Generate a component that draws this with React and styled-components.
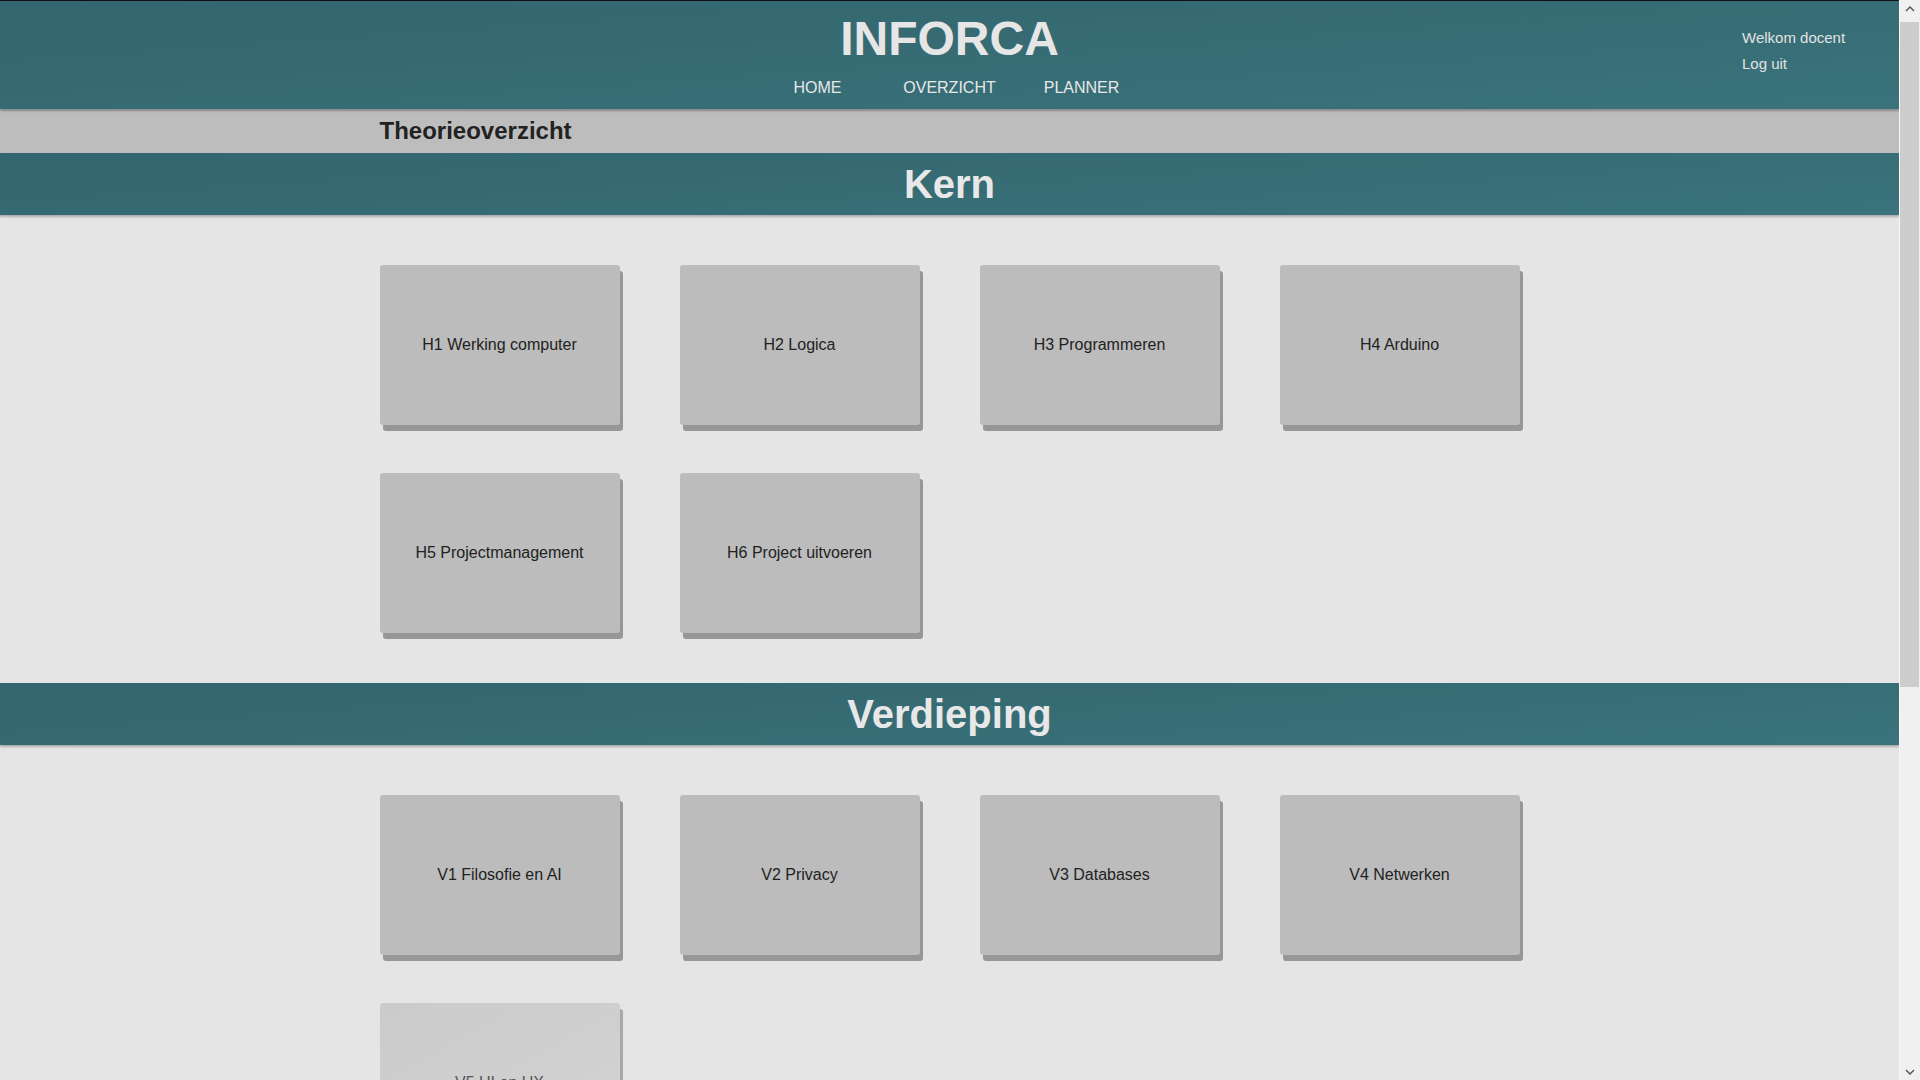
import React from "react";
import styled, { createGlobalStyle } from "styled-components";

const GlobalStyle = createGlobalStyle`
  html, body {
    margin: 0;
    padding: 0;
    height: 100%;
    overflow: hidden;
    background: #e5e5e5;
    font-family: "Liberation Sans", Arial, sans-serif;
  }
  #root { height: 100%; }
`;

const Frame = styled.div`
  display: flex;
  height: 100vh;
  overflow: hidden;
`;

const Main = styled.main`
  flex: 1;
  min-width: 0;
  overflow-y: auto;
  scrollbar-width: none;
  background: #e5e5e5;
`;

const Page = styled.div`
  min-height: 1680px;
`;

const Rail = styled.div`
  flex: none;
  width: 20px;
  border-left: 1px solid #f8f8f8;
  background: #f0f0f0;
  display: flex;
  flex-direction: column;
`;

const RailButton = styled.div`
  height: ${(p) => p.$h}px;
  display: flex;
  align-items: ${(p) => (p.$up ? "flex-start" : "center")};
  padding-top: ${(p) => (p.$up ? 6 : 0)}px;
  box-sizing: border-box;
  justify-content: center;
`;

const Thumb = styled.div`
  height: 665px;
  margin-right: 1px;
  background: #cdcdcd;
`;

const RailSpace = styled.div`
  flex: 1;
`;

const tealBg = `
  background-color: #376d75;
  background-image: linear-gradient(176deg, #33666e 0%, #366b73 45%, #3a737c 100%);
`;

const Header = styled.header`
  position: relative;
  z-index: 2;
  ${tealBg}
  border-top: 1px solid #111;
  padding: 10px 0 11px;
  display: grid;
  grid-template-columns: 1fr auto 1fr;
  box-shadow: 0 2px 2px rgba(0, 0, 0, 0.28);
`;

const Center = styled.div`
  grid-column: 2;
  display: flex;
  flex-direction: column;
  align-items: center;
`;

const Title = styled.h1`
  margin: 0;
  font-size: 48px;
  line-height: 56px;
  font-weight: 700;
  color: #e6e6e6;
`;

const Nav = styled.nav`
  display: flex;
  margin-top: 11px;
`;

const NavLink = styled.a`
  width: 132px;
  text-align: center;
  font-size: 16px;
  line-height: 20px;
  color: #e8e8e8;
  text-decoration: none;
`;

const User = styled.div`
  grid-column: 3;
  justify-self: end;
  width: 112px;
  padding-right: 45px;
  margin-top: 14px;
  display: flex;
  flex-direction: column;
`;

const UserLine = styled.span`
  font-size: 15px;
  line-height: 26px;
  color: #e2e2e2;
  white-space: nowrap;
`;

const SubBar = styled.div`
  background: #bdbdbd;
  height: 44px;
  display: flex;
  justify-content: center;
`;

const SubInner = styled.div`
  width: 1140px;
`;

const SubTitle = styled.h2`
  margin: 0;
  font-size: 24px;
  line-height: 44px;
  font-weight: 700;
  color: #222;
`;

const SectionBar = styled.div`
  position: relative;
  z-index: 1;
  ${tealBg}
  height: 62px;
  display: flex;
  justify-content: center;
  box-shadow: 0 2px 2px rgba(0, 0, 0, 0.25);
`;

const SectionTitle = styled.h2`
  margin: 0;
  font-size: 40px;
  line-height: 62px;
  font-weight: 700;
  color: #e8e8e8;
`;

const Grid = styled.div`
  display: grid;
  grid-template-columns: repeat(4, 240px);
  column-gap: 60px;
  row-gap: 48px;
  justify-content: center;
  padding: 50px 0;
`;

const Card = styled.a`
  height: 160px;
  background: ${(p) =>
    p.$faded
      ? "linear-gradient(150deg, #cbcbcb 0%, #cfcfcf 50%, #d4d4d4 100%)"
      : "#bcbcbc"};
  border-radius: 3px;
  box-shadow: 3px 6px 0 ${(p) => (p.$faded ? "#a8a8a8" : "#979797")};
  display: flex;
  align-items: center;
  justify-content: center;
  font-size: 16px;
  color: ${(p) => (p.$faded ? "#555" : "#222")};
  text-decoration: none;
`;

const Chevron = ({ up }) => (
  <svg width="10" height="6" viewBox="0 0 10 6">
    <path
      d={up ? "M1 5 L5 1 L9 5" : "M1 1 L5 5 L9 1"}
      fill="none"
      stroke="#505050"
      strokeWidth="1.4"
    />
  </svg>
);

const sections = [
  {
    title: "Kern",
    items: [
      "H1 Werking computer",
      "H2 Logica",
      "H3 Programmeren",
      "H4 Arduino",
      "H5 Projectmanagement",
      "H6 Project uitvoeren",
    ],
  },
  {
    title: "Verdieping",
    items: [
      "V1 Filosofie en AI",
      "V2 Privacy",
      "V3 Databases",
      "V4 Netwerken",
      "V5 UI en UX",
    ],
    faded: ["V5 UI en UX"],
  },
];

export default function App() {
  return (
    <Frame>
      <GlobalStyle />
      <Main>
        <Page>
          <Header>
            <Center>
              <Title>INFORCA</Title>
              <Nav>
                <NavLink href="#">HOME</NavLink>
                <NavLink href="#">OVERZICHT</NavLink>
                <NavLink href="#">PLANNER</NavLink>
              </Nav>
            </Center>
            <User>
              <UserLine>Welkom docent</UserLine>
              <UserLine>Log uit</UserLine>
            </User>
          </Header>
          <SubBar>
            <SubInner>
              <SubTitle>Theorieoverzicht</SubTitle>
            </SubInner>
          </SubBar>
          {sections.map((s) => (
            <section key={s.title}>
              <SectionBar>
                <SectionTitle>{s.title}</SectionTitle>
              </SectionBar>
              <Grid>
                {s.items.map((it) => (
                  <Card
                    key={it}
                    href="#"
                    $faded={s.faded && s.faded.includes(it)}
                  >
                    {it}
                  </Card>
                ))}
              </Grid>
            </section>
          ))}
        </Page>
      </Main>
      <Rail>
        <RailButton $h={22} $up>
          <Chevron up />
        </RailButton>
        <Thumb />
        <RailSpace />
        <RailButton $h={17}>
          <Chevron />
        </RailButton>
      </Rail>
    </Frame>
  );
}
